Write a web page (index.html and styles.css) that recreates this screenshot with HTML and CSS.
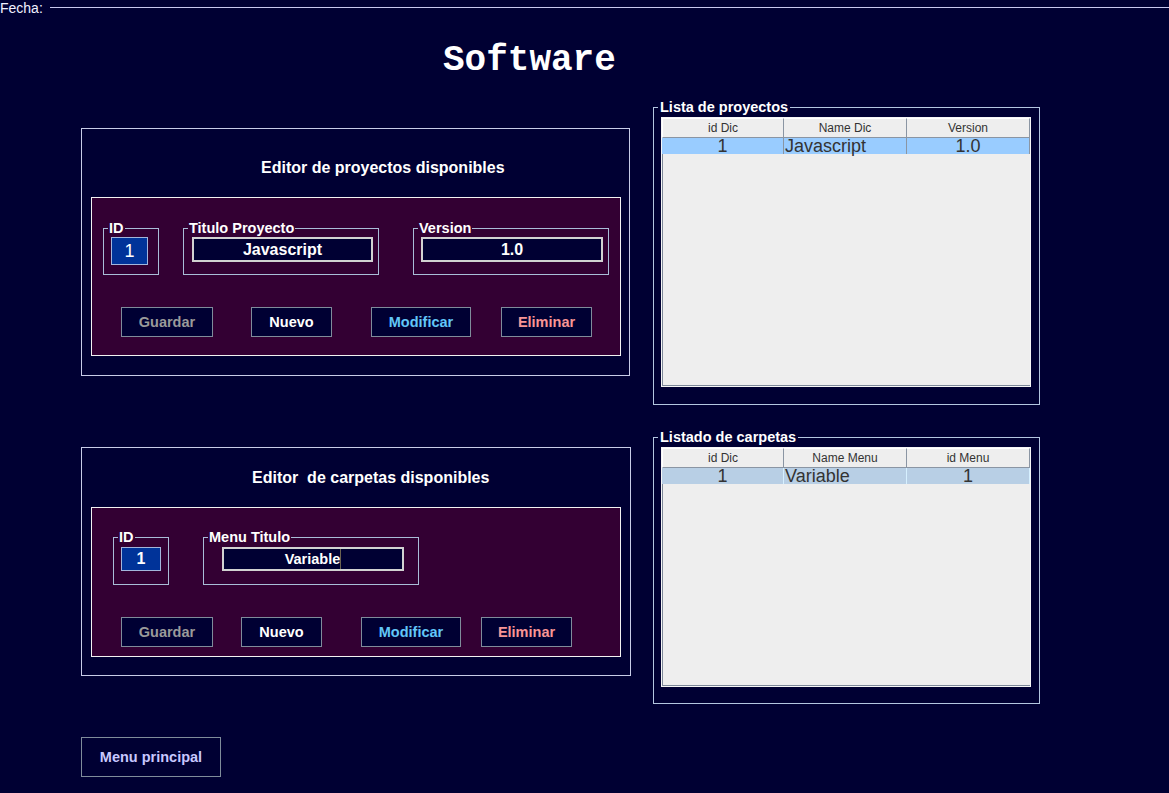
FILE: index.html
```html
<!DOCTYPE html>
<html lang="es">
<head>
<meta charset="utf-8">
<title>Software</title>
<link rel="stylesheet" href="styles.css">
</head>
<body>
<header class="topbar"><span class="fecha">Fecha:</span><span class="rule"></span></header>
<h1 class="title">Software</h1>
<main class="layout">
  <div class="col-left">
    <section class="editor editor-proj">
      <h2 class="editor-title">Editor de proyectos disponibles</h2>
      <div class="form form-proj">
        <div class="fields">
          <fieldset class="fs"><legend>ID</legend>
            <div class="fs-body p-id1"><div class="idbox idbox-1">1</div></div>
          </fieldset>
          <fieldset class="fs fs-gap24"><legend>Titulo Proyecto</legend>
            <div class="fs-body p-tit1"><div class="txt txt-tit1">Javascript</div></div>
          </fieldset>
          <fieldset class="fs fs-gap34"><legend>Version</legend>
            <div class="fs-body p-ver1"><div class="txt txt-ver1">1.0</div></div>
          </fieldset>
        </div>
        <div class="buttons btns-proj">
          <button class="btn btn-guardar">Guardar</button>
          <button class="btn btn-nuevo">Nuevo</button>
          <button class="btn btn-modificar">Modificar</button>
          <button class="btn btn-eliminar">Eliminar</button>
        </div>
      </div>
    </section>

    <section class="editor editor-carp">
      <h2 class="editor-title">Editor&nbsp; de carpetas disponibles</h2>
      <div class="form form-carp">
        <div class="fields">
          <fieldset class="fs fs-gap21"><legend>ID</legend>
            <div class="fs-body p-id2"><div class="idbox idbox-2">1</div></div>
          </fieldset>
          <fieldset class="fs fs-gap34"><legend>Menu Titulo</legend>
            <div class="fs-body p-menu"><div class="txt txt-menu">Variable<span class="caret"></span></div></div>
          </fieldset>
        </div>
        <div class="buttons btns-carp">
          <button class="btn btn-guardar">Guardar</button>
          <button class="btn btn-nuevo">Nuevo</button>
          <button class="btn btn-modificar">Modificar</button>
          <button class="btn btn-eliminar">Eliminar</button>
        </div>
      </div>
    </section>

    <button class="btn btn-main">Menu principal</button>
  </div>

  <div class="col-right">
    <fieldset class="list list-proj"><legend>Lista de proyectos</legend>
      <div class="tbl tbl-proj">
        <div class="thead">
          <div class="th">id Dic</div><div class="th">Name Dic</div><div class="th">Version</div>
        </div>
        <div class="trow trow-sel">
          <div class="td td-c">1</div><div class="td td-l">Javascript</div><div class="td td-c">1.0</div>
        </div>
      </div>
    </fieldset>

    <fieldset class="list list-carp"><legend>Listado de carpetas</legend>
      <div class="tbl tbl-carp">
        <div class="thead">
          <div class="th">id Dic</div><div class="th">Name Menu</div><div class="th">id Menu</div>
        </div>
        <div class="trow trow-sel2">
          <div class="td td-c">1</div><div class="td td-l">Variable</div><div class="td td-c">1</div>
        </div>
      </div>
    </fieldset>
  </div>
</main>
</body>
</html>
```

FILE: styles.css
```css
html, body {
  margin: 0;
  padding: 0;
}
body {
  background: #000033;
  font-family: "Liberation Sans", Arial, sans-serif;
  color: #ffffff;
  width: 1169px;
  height: 793px;
  overflow: hidden;
}

/* top bar */
.topbar {
  display: flex;
  align-items: flex-start;
  height: 16px;
}
.fecha {
  font-size: 14px;
  line-height: 16px;
  color: #f0f0ff;
}
.rule {
  flex: 1;
  margin-top: 7px;
  margin-left: 7px;
  border-top: 1px solid #c8c8ee;
}

.title {
  margin: 27px 0 0 0;
  padding-left: 443px;
  font-family: "Liberation Mono", "Courier New", monospace;
  font-weight: bold;
  font-size: 36px;
  line-height: 36px;
  height: 36px;
  color: #ffffff;
}

/* layout */
.layout {
  display: flex;
  align-items: flex-start;
  padding-left: 81px;
}
.col-left {
  width: 550px;
  margin-top: 49px;
  display: flex;
  flex-direction: column;
  align-items: flex-start;
}
.col-right {
  width: 387px;
  margin-left: 22px;
  margin-top: 21px;
}

/* editor panels */
.editor {
  box-sizing: border-box;
  border: 1px solid #c8cce8;
}
.editor-proj {
  width: 549px;
  padding: 30px 8px 19px 9px;
}
.editor-carp {
  width: 550px;
  margin-top: 71px;
  padding: 21px 9px 18px 9px;
}
.editor-title {
  margin: 0;
  font-size: 16px;
  line-height: 18px;
  font-weight: bold;
  color: #ffffff;
  white-space: nowrap;
}
.editor-proj .editor-title { padding-left: 170px; }
.editor-carp .editor-title { padding-left: 161px; }

.form {
  box-sizing: border-box;
  width: 530px;
  margin-top: 20px;
  background: #330033;
  border: 1px solid #f2f2f2;
}
.form-proj {
  height: 159px;
  padding-top: 23px;
}
.form-carp {
  height: 150px;
  padding-top: 22px;
}

.fields {
  display: flex;
  align-items: flex-start;
}

/* titled borders */
.fs {
  margin: 0 0 0 11px;
  padding: 0;
  border: 1px solid #a9bdd8;
  min-width: 0;
}
.fs-gap21 { margin-left: 21px; }
.fs-gap24 { margin-left: 24px; }
.fs-gap34 { margin-left: 34px; }
.fs legend,
.list legend {
  margin-left: 4px;
  padding: 0 1px;
  font-size: 14.5px;
  line-height: 15px;
  font-weight: bold;
  color: #ffffff;
  white-space: nowrap;
}
.fs-body { display: flex; }
.p-id1 { padding: 1px 10px 9px 7px; }
.p-tit1 { padding: 1px 5px 12px 8px; }
.p-ver1 { padding: 1px 5px 12px 7px; }
.p-id2 { padding: 2px 7px 13px 7px; }
.p-menu { padding: 2px 14px 13px 18px; }

.idbox {
  box-sizing: border-box;
  display: flex;
  align-items: center;
  justify-content: center;
  background: #003399;
  border: 1px solid #a3b6dc;
  color: #ffffff;
}
.idbox-1 {
  width: 37px;
  height: 28px;
  font-size: 18px;
}
.idbox-2 {
  width: 40px;
  height: 24px;
  font-size: 16px;
  font-weight: bold;
}

.txt {
  box-sizing: border-box;
  display: flex;
  align-items: center;
  justify-content: center;
  background: #000033;
  border: 2px solid #d2d2d2;
  color: #ffffff;
  font-weight: bold;
  white-space: nowrap;
}
.txt-tit1 { width: 181px; height: 25px; font-size: 16px; }
.txt-ver1 { width: 182px; height: 25px; font-size: 16px; }
.txt-menu { width: 182px; height: 24px; font-size: 14.5px; }
.caret {
  display: inline-block;
  width: 1px;
  height: 20px;
  background: #6b6250;
}

/* buttons */
.buttons {
  display: flex;
  margin-top: 32px;
  padding-left: 29px;
}
.btn {
  box-sizing: border-box;
  height: 30px;
  margin: 0;
  padding: 0;
  background: #000033;
  border: 1px solid #7f8c9b;
  font-family: "Liberation Sans", Arial, sans-serif;
  font-size: 14.5px;
  font-weight: bold;
  text-align: center;
  cursor: pointer;
}
.btn-guardar { width: 92px; color: #9a9a9a; }
.btn-nuevo { width: 81px; color: #ffffff; }
.btn-modificar { width: 100px; color: #62c6f8; }
.btn-eliminar { width: 91px; color: #f79595; }

.btns-proj .btn-nuevo { margin-left: 38px; }
.btns-proj .btn-modificar { margin-left: 39px; }
.btns-proj .btn-eliminar { margin-left: 30px; }
.btns-carp .btn-nuevo { margin-left: 28px; }
.btns-carp .btn-modificar { margin-left: 39px; }
.btns-carp .btn-eliminar { margin-left: 20px; }

.btn-main {
  width: 140px;
  height: 40px;
  margin-top: 61px;
  color: #c8c8ff;
}

/* lists */
.list {
  box-sizing: border-box;
  width: 387px;
  margin: 0;
  padding: 2px 8px 17px 7px;
  border: 1px solid #b3c6e0;
  min-width: 0;
}
.list legend {
  margin-left: -3px;
  padding: 0 2px;
}
.list-carp {
  margin-top: 25px;
  padding-bottom: 16px;
}

.tbl {
  box-sizing: border-box;
  width: 370px;
  background: #eeeeee;
  border: 1px solid #f6f6f6;
  box-shadow: inset 1px -1px 0 #7d8898;
  color: #333333;
}
.tbl-proj { height: 270px; }
.tbl-carp { height: 240px; }

.thead,
.trow {
  display: grid;
  grid-template-columns: 122px 123px 123px;
}
.th {
  box-sizing: border-box;
  height: 20px;
  background: #eeeeee;
  border-right: 1px solid #8a95a3;
  border-bottom: 1px solid #8a95a3;
  border-top: 1px solid #ffffff;
  font-size: 12px;
  line-height: 18px;
  text-align: center;
  color: #333333;
  white-space: nowrap;
}
.th:first-child { border-left: 1px solid #ffffff; }
.td {
  box-sizing: border-box;
  height: 16px;
  font-size: 18px;
  line-height: 16px;
  white-space: nowrap;
  color: #333333;
  border-right: 1px solid #8a95a3;
}
.td-c { text-align: center; }
.td-l { text-align: left; padding-left: 1px; }
.trow-sel { background: #99ccff; }
.trow-sel2 { background: #b8cfe5; }
.trow-sel2 .td { border-right-color: #d6f0ff; }
```
